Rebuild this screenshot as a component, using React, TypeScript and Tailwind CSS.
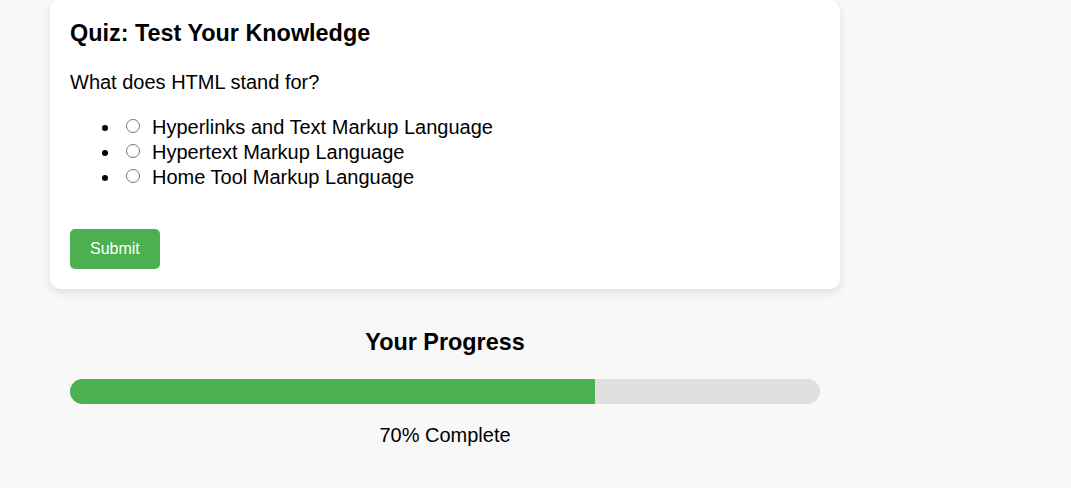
const OPTIONS = [
  'Hyperlinks and Text Markup Language',
  'Hypertext Markup Language',
  'Home Tool Markup Language',
];

export default function App() {
  const progress = 70;

  return (
    <div className="min-h-screen bg-[#f8f8f8] text-black font-['Liberation_Sans',Arial,sans-serif]">
      <div className="ml-[50px] w-[790px]">
        {/* Quiz card */}
        <div className="bg-white rounded-[10px] shadow-[0_4px_8px_rgba(0,0,0,0.1)] p-[20px]">
          <h2 className="text-[23.4px] leading-[27px] font-bold">Quiz: Test Your Knowledge</h2>
          <p className="mt-[24px] text-[20px] leading-[23px]">What does HTML stand for?</p>
          <ul className="mt-[21px] list-disc pl-[51px] text-[20px] leading-[25px]">
            {OPTIONS.map(o => (
              <li key={o} className="h-[25px]">
                <label className="inline-flex items-center align-top h-[25px]">
                  <input type="radio" name="q1" className="ml-[5px] mr-[12px] w-[14px] h-[14px] -translate-y-[2px]" />
                  {o}
                </label>
              </li>
            ))}
          </ul>
          <button className="block mt-[39px] h-[40px] px-[20px] rounded-[5px] bg-[#4caf50] text-white text-[16px]">
            Submit
          </button>
        </div>

        {/* Progress */}
        <div className="px-[20px] pt-[40px] pb-[40px] text-center">
          <h3 className="text-[23.4px] leading-[27px] font-bold">Your Progress</h3>
          <div className="mt-[23px] h-[25px] rounded-full bg-[#e0e0e0] overflow-hidden">
            <div className="h-full bg-[#4caf50]" style={{ width: `${progress}%` }} />
          </div>
          <p className="mt-[20px] text-[20px] leading-[23px]">{progress}% Complete</p>
        </div>
      </div>
    </div>
  );
}
